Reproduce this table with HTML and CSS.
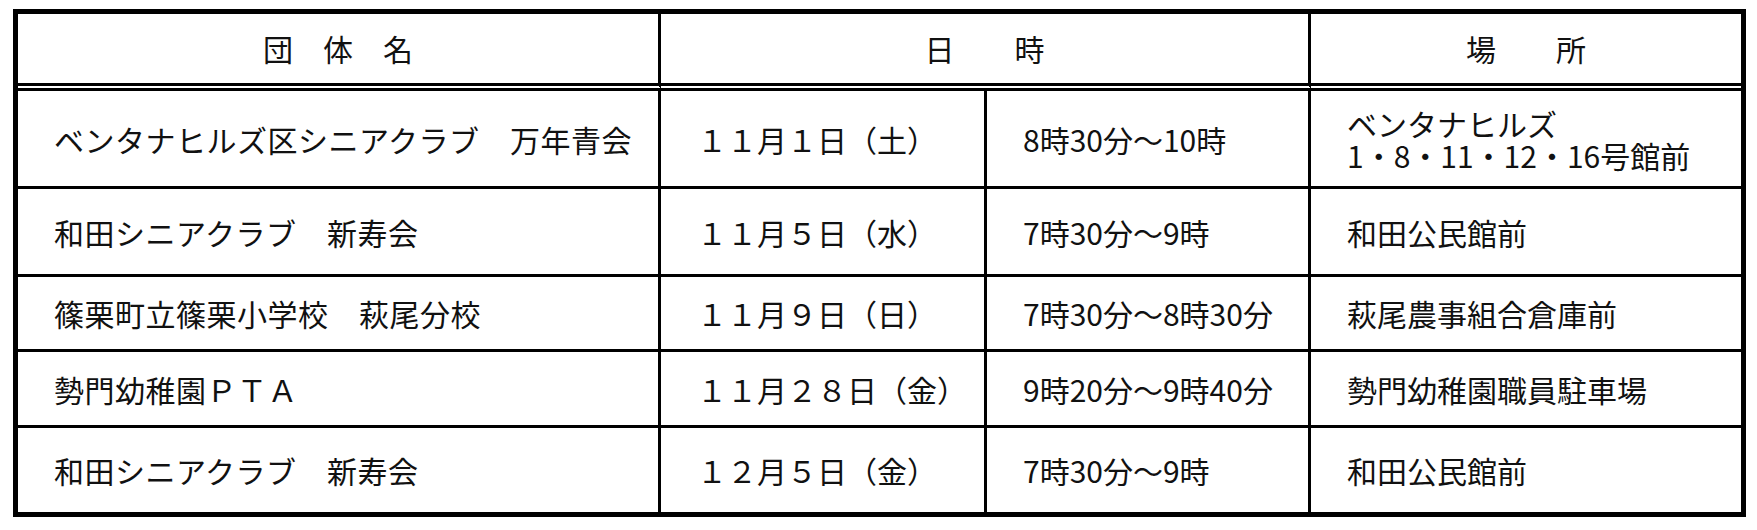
FILE: index.html
```html
<!DOCTYPE html>
<html lang="ja">
<head>
<meta charset="utf-8">
<title>清掃活動日程</title>
<link rel="stylesheet" href="styles.css">
</head>
<body>
<div class="sheet">
  <div class="schedule" role="table">
    <div class="cell head c1" role="columnheader">団　体　名</div>
    <div class="cell head span2" role="columnheader">日　　時</div>
    <div class="cell head c4" role="columnheader">場　　所</div>

    <div class="cell r1 c1">ベンタナヒルズ区シニアクラブ　万年青会</div>
    <div class="cell r1 c2">１１月１日（土）</div>
    <div class="cell r1 c3">8時30分～10時</div>
    <div class="cell r1 c4 multi"><span class="line">ベンタナヒルズ</span><span class="line">1・8・11・12・16号館前</span></div>

    <div class="cell r2 c1">和田シニアクラブ　新寿会</div>
    <div class="cell r2 c2">１１月５日（水）</div>
    <div class="cell r2 c3">7時30分～9時</div>
    <div class="cell r2 c4">和田公民館前</div>

    <div class="cell r3 c1">篠栗町立篠栗小学校　萩尾分校</div>
    <div class="cell r3 c2">１１月９日（日）</div>
    <div class="cell r3 c3">7時30分～8時30分</div>
    <div class="cell r3 c4">萩尾農事組合倉庫前</div>

    <div class="cell r4 c1">勢門幼稚園ＰＴＡ</div>
    <div class="cell r4 c2">１１月２８日（金）</div>
    <div class="cell r4 c3">9時20分～9時40分</div>
    <div class="cell r4 c4">勢門幼稚園職員駐車場</div>

    <div class="cell last c1">和田シニアクラブ　新寿会</div>
    <div class="cell last c2">１２月５日（金）</div>
    <div class="cell last c3">7時30分～9時</div>
    <div class="cell last c4">和田公民館前</div>
  </div>
</div>
</body>
</html>
```

FILE: styles.css
```css
* {
  box-sizing: border-box;
}

html, body {
  margin: 0;
  padding: 0;
  background: #ffffff;
}

.sheet {
  padding: 9px 0 0 13px;
}

.schedule {
  display: grid;
  grid-template-columns: 643px 326px 324px 430px;
  grid-template-rows: 77px 98px 88px 75px 76px 84px;
  width: 1733px;
  border: 5px solid #000;
  font-family: "Noto Sans CJK JP", "Noto Sans", sans-serif;
  font-size: 30px;
  line-height: 32px;
  color: #111;
}

.cell {
  display: flex;
  align-items: center;
  padding-left: 36px;
  border-right: 3px solid #000;
  border-bottom: 3px solid #000;
  white-space: nowrap;
}

.c1 {
  letter-spacing: 0.5px;
}

.c4 {
  border-right: none;
}

.head {
  justify-content: center;
  padding-left: 0;
  border-bottom: 8px double #000;
  padding-bottom: 2px;
  letter-spacing: 0;
}

.span2 {
  grid-column: span 2;
}

.last {
  border-bottom: none;
}

.multi {
  flex-direction: column;
  align-items: flex-start;
  justify-content: center;
}

.line {
  display: block;
  line-height: 32px;
}
```
